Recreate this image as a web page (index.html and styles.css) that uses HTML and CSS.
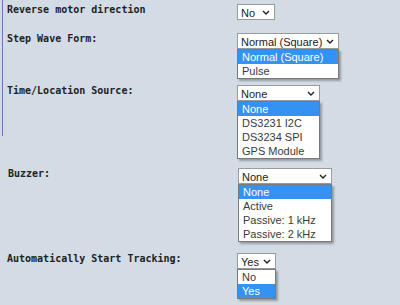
FILE: index.html
```html
<!DOCTYPE html>
<html>
<head>
<meta charset="utf-8">
<link rel="stylesheet" href="styles.css">
</head>
<body>
<div class="page">
  <div class="rule"></div>
  <div class="rows">
    <div class="row r1">
      <div class="label">Reverse motor direction</div>
      <div class="ctrl w-no">
        <div class="select"><span>No</span><svg class="chev" width="8" height="5" viewBox="0 0 8 5"><polyline points="1,1 4,4 7,1"/></svg></div>
      </div>
    </div>
    <div class="row r2">
      <div class="label">Step Wave Form:</div>
      <div class="ctrl w-wave">
        <div class="select"><span>Normal (Square)</span><svg class="chev" width="8" height="5" viewBox="0 0 8 5"><polyline points="1,1 4,4 7,1"/></svg></div>
        <ul class="list">
          <li class="sel">Normal (Square)</li>
          <li>Pulse</li>
        </ul>
      </div>
    </div>
    <div class="row r3">
      <div class="label">Time/Location Source:</div>
      <div class="ctrl w-time">
        <div class="select"><span>None</span><svg class="chev" width="8" height="5" viewBox="0 0 8 5"><polyline points="1,1 4,4 7,1"/></svg></div>
        <ul class="list">
          <li class="sel">None</li>
          <li>DS3231 I2C</li>
          <li>DS3234 SPI</li>
          <li>GPS Module</li>
        </ul>
      </div>
    </div>
    <div class="row r4">
      <div class="label buzz">Buzzer:</div>
      <div class="ctrl w-buzz">
        <div class="select"><span>None</span><svg class="chev" width="8" height="5" viewBox="0 0 8 5"><polyline points="1,1 4,4 7,1"/></svg></div>
        <ul class="list">
          <li class="sel">None</li>
          <li>Active</li>
          <li>Passive: 1 kHz</li>
          <li>Passive: 2 kHz</li>
        </ul>
      </div>
    </div>
    <div class="row r5">
      <div class="label">Automatically Start Tracking:</div>
      <div class="ctrl w-yes">
        <div class="select"><span>Yes</span><svg class="chev" width="8" height="5" viewBox="0 0 8 5"><polyline points="1,1 4,4 7,1"/></svg></div>
        <ul class="list">
          <li>No</li>
          <li class="sel">Yes</li>
        </ul>
      </div>
    </div>
  </div>
</div>
</body>
</html>
```
FILE: styles.css
```css
html, body {
  margin: 0;
  padding: 0;
  background: #d3dce5;
}
.page {
  display: flex;
  align-items: flex-start;
  width: 400px;
  height: 305px;
  overflow: hidden;
}
.rule {
  width: 1px;
  height: 136px;
  margin-left: 2px;
  background: #6f78b6;
  flex: none;
}
.rows {
  padding-left: 4px;
  padding-top: 4px;
}
.row {
  display: flex;
  align-items: flex-start;
}
.r2 { margin-top: 13px; }
.r3 { margin-top: 6px; }
.r4 { margin-top: 9px; }
.r5 { margin-top: 11px; }
.label {
  width: 230px;
  flex: none;
  font-family: "DejaVu Sans Mono", "Liberation Mono", monospace;
  font-weight: bold;
  font-size: 10px;
  line-height: 10px;
  color: #222;
  margin-top: 1px;
}
.label.buzz { padding-left: 1px; }
.ctrl {
  display: flex;
  flex-direction: column;
}
.w-no { width: 38px; }
.w-wave { width: 102px; }
.w-time { width: 83px; }
.w-buzz { width: 94px; }
.w-yes { width: 39px; }
.select {
  box-sizing: border-box;
  height: 16px;
  background: #fff;
  border: 1px solid #9a9a9a;
  display: flex;
  align-items: center;
  justify-content: space-between;
  padding: 0 4px 0 3px;
  font-family: "Liberation Sans", Arial, sans-serif;
  font-size: 11px;
  line-height: 12px;
  color: #222;
}
.select span { padding-top: 1px; }
.chev {
  flex: none;
  fill: none;
  stroke: #222;
  stroke-width: 1.4;
}
.list {
  list-style: none;
  margin: 0;
  padding: 0;
  background: #fff;
  border: 1px solid #7a7a7a;
  box-shadow: 2px 2px 2px rgba(0, 0, 0, 0.3);
  font-family: "Liberation Sans", Arial, sans-serif;
  font-size: 11px;
  color: #3a3a3a;
}
.list li {
  height: 14px;
  line-height: 14px;
  padding-left: 4px;
  white-space: nowrap;
}
.list li.sel {
  background: #3592f2;
  color: #fff;
}
```
